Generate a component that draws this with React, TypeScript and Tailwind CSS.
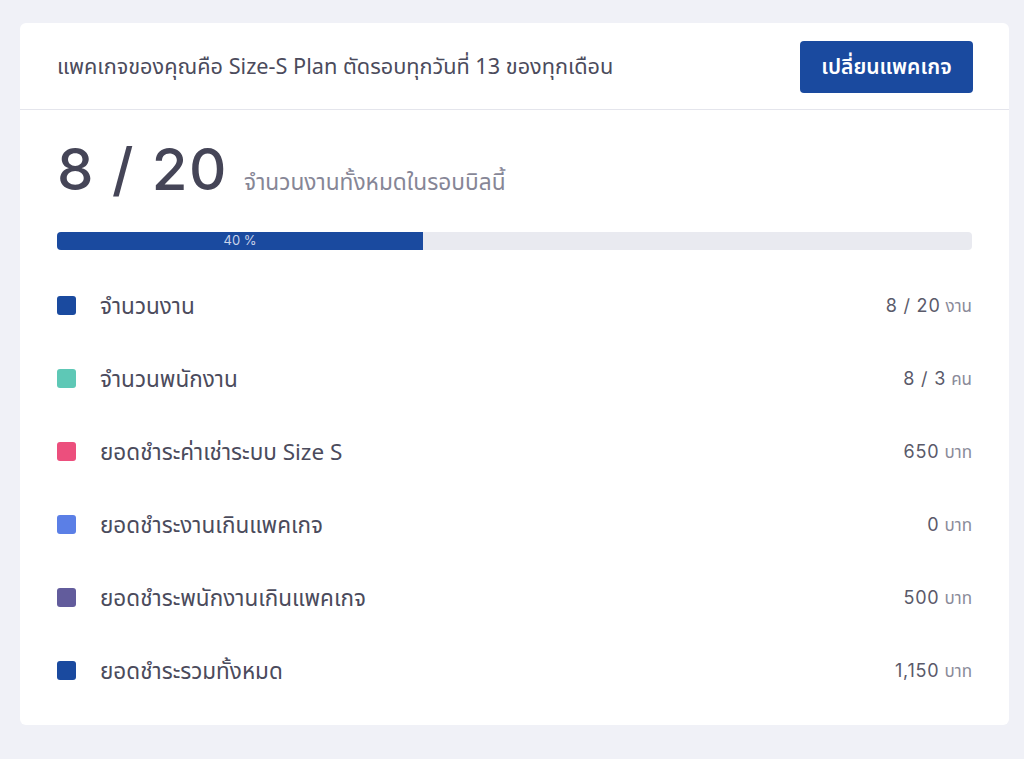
import React from "react";

const rows = [
  { color: "bg-[#1a4a9f]", label: "จำนวนงาน", value: "8 / 20", unit: "งาน" },
  { color: "bg-[#5ec8b6]", label: "จำนวนพนักงาน", value: "8 / 3", unit: "คน" },
  { color: "bg-[#ec4f7d]", label: "ยอดชำระค่าเช่าระบบ Size S", value: "650", unit: "บาท" },
  { color: "bg-[#5b7fe6]", label: "ยอดชำระงานเกินแพคเกจ", value: "0", unit: "บาท" },
  { color: "bg-[#625c9c]", label: "ยอดชำระพนักงานเกินแพคเกจ", value: "500", unit: "บาท" },
  { color: "bg-[#1a4a9f]", label: "ยอดชำระรวมทั้งหมด", value: "1,150", unit: "บาท" },
];

const numFont = { fontFamily: 'Inter, "Noto Sans", "Noto Sans Thai", sans-serif' };

export default function App() {
  return (
    <div
      className="min-h-[759px] w-full bg-[#f0f1f7] px-[20px] pt-[23px] pb-[34px]"
      style={{ fontFamily: '"Noto Sans", "Noto Sans Thai", "Liberation Sans", sans-serif' }}
    >
      <div className="w-[989px] rounded-[6px] bg-white">
        <div className="flex h-[87px] items-center justify-between border-b border-[#e4e5ec] pl-[37px] pr-[36px]">
          <div className="text-[21.7px] text-[#4b4b5c]">
            แพคเกจของคุณคือ Size-S Plan ตัดรอบทุกวันที่ 13 ของทุกเดือน
          </div>
          <button className="mt-[1px] h-[52px] w-[173px] rounded-[4px] bg-[#1a4a9f] text-[21px] font-semibold text-white">
            เปลี่ยนแพคเกจ
          </button>
        </div>
        <div className="px-[37px] pt-[24px] pb-[18px]">
          <div className="flex items-baseline gap-[16px]">
            <div className="text-[58px] font-medium leading-[70px] tracking-[1.5px] text-[#454557]" style={numFont}>
              8 / 20
            </div>
            <div className="text-[22.7px] text-[#868696]">จำนวนงานทั้งหมดในรอบบิลนี้</div>
          </div>
          <div className="mt-[28px] h-[18px] w-full overflow-hidden rounded-[4px] bg-[#e9eaf0]">
            <div
              className="flex h-full items-center justify-center bg-[#1a4a9f] text-[13px] text-[#c9d3ea]"
              style={{ width: "40%", ...numFont }}
            >
              40 %
            </div>
          </div>
          <div className="mt-[19px] flex flex-col">
            {rows.map((r, i) => (
              <div key={i} className="flex h-[73px] items-center justify-between">
                <div className="flex items-center gap-[24px]">
                  <div className={`h-[19px] w-[19px] rounded-[3px] ${r.color}`} />
                  <div className="text-[22.5px] text-[#4b4b5c]">{r.label}</div>
                </div>
                <div className="flex items-baseline gap-[5px]">
                  <span className="text-[18px] tracking-[0.8px] text-[#5a5a6a]" style={numFont}>
                    {r.value}
                  </span>
                  <span className="text-[17px] text-[#8a8a99]">{r.unit}</span>
                </div>
              </div>
            ))}
          </div>
        </div>
      </div>
    </div>
  );
}
